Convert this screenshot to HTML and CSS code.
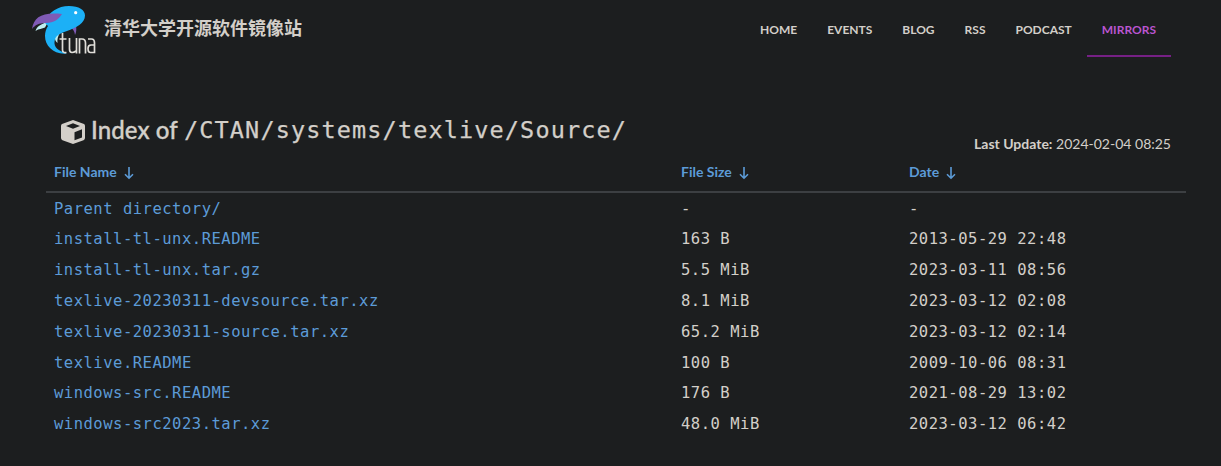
FILE: index.html
```html
<!DOCTYPE html>
<html lang="zh-CN">
<head>
<meta charset="utf-8">
<title>Index of /CTAN/systems/texlive/Source/</title>
<link rel="stylesheet" href="styles.css">
</head>
<body>
<header class="navbar">
  <a class="brand">
    <svg class="logo" viewBox="0 0 65 50" width="65" height="50" aria-hidden="true">
      <path fill="#7f5ab5" d="M38 21 44 19C44.500 23 44.500 26 43 29 42.500 25 41 23 38 21Z"/>
      <path fill="#bfeff2" d="M16 16C9 18 5 20 3.500 25 7 22.500 10 23 13 21.500ZM26 25C22 29 22 34 25.500 37 25 33 26 30 28 27Z"/>
      <path fill="#1cb0f6" d="M12 16C17 6 26 0 37 0 47 0 53 4 53 9.500 53 17 44 22 35 25 27 27.500 23 30 22.500 36 22 41 26 45 35 47.500 22 49 13 40 13 30 13 26 14 23 16 20Z"/>
      <path fill="#7f5ab5" d="M0 23C2 11 10 6 30 8 27 13 22 17 14 17 7 17 3 19 0 23Z"/>
      <circle cx="43.700" cy="6.700" r="1.600" fill="#fff"/>
      <path fill="none" stroke="#e0ded9" stroke-width="1.700" d="M30.500 27V44Q30.500 47 34.500 46.500M27.500 33H34.500M37.500 32V43Q37.500 46.500 40 46.500 42 46.500 44 45M44.500 32V47.500M47.500 47.500V33H50Q53.500 33 53.500 37V47.500M56 33H59.500Q62.500 33 62.500 37V46.500H58.500Q56 46.500 56 42.500 56 39 59 39H62.500"/>
    </svg>
    <span class="site-name">清华大学开源软件镜像站</span>
  </a>
  <nav class="menu">
    <a>HOME</a><a>EVENTS</a><a>BLOG</a><a>RSS</a><a>PODCAST</a><a class="active">MIRRORS</a>
  </nav>
</header>
<main class="listing">
  <div class="heading">
    <h1>
      <svg class="cube" viewBox="0 0 24 24" width="24" height="24" aria-hidden="true">
        <path fill="currentColor" fill-rule="evenodd" d="M12 0 23 4Q24 4.500 24 6V18Q24 19.500 22.500 20.200L12 24 1.500 20.200Q0 19.500 0 18V6Q0 4.500 1 4ZM12 3.200 5 6 12 8.800 19 6ZM13.500 12.200V20.300L21 17.400V9.300Z"/>
      </svg><span class="label">Index of</span><code>/CTAN/systems/texlive/Source/</code>
    </h1>
    <p class="updated"><b>Last Update:</b> 2024-02-04 08:25</p>
  </div>
  <table class="files">
    <thead><tr>
      <th class="name">File Name<svg class="arrow" viewBox="0 0 10 14" width="10" height="14"><path d="M5 1V12M1 8.200 5 12.200 9 8.200"/></svg></th>
      <th class="size">File Size<svg class="arrow" viewBox="0 0 10 14" width="10" height="14"><path d="M5 1V12M1 8.200 5 12.200 9 8.200"/></svg></th>
      <th>Date<svg class="arrow" viewBox="0 0 10 14" width="10" height="14"><path d="M5 1V12M1 8.200 5 12.200 9 8.200"/></svg></th>
    </tr></thead>
    <tbody>
      <tr><td><a>Parent directory/</a></td><td>-</td><td>-</td></tr>
      <tr><td><a>install-tl-unx.README</a></td><td>163 B</td><td>2013-05-29 22:48</td></tr>
      <tr><td><a>install-tl-unx.tar.gz</a></td><td>5.5 MiB</td><td>2023-03-11 08:56</td></tr>
      <tr><td><a>texlive-20230311-devsource.tar.xz</a></td><td>8.1 MiB</td><td>2023-03-12 02:08</td></tr>
      <tr><td><a>texlive-20230311-source.tar.xz</a></td><td>65.2 MiB</td><td>2023-03-12 02:14</td></tr>
      <tr><td><a>texlive.README</a></td><td>100 B</td><td>2009-10-06 08:31</td></tr>
      <tr><td><a>windows-src.README</a></td><td>176 B</td><td>2021-08-29 13:02</td></tr>
      <tr><td><a>windows-src2023.tar.xz</a></td><td>48.0 MiB</td><td>2023-03-12 06:42</td></tr>
    </tbody>
  </table>
</main>
</body>
</html>
```
FILE: styles.css
```css
* { box-sizing: border-box; }
body {
  margin: 0;
  height: 466px;
  overflow: hidden;
  background: #1c1e1f;
  color: #d3cfc9;
  font: 14px/21px Lato, "Noto Sans CJK SC", sans-serif;
}
.navbar {
  display: flex;
  justify-content: space-between;
  height: 57px;
  padding: 0 50px 0 32px;
}
.brand { display: flex; padding-top: 6px; }
.logo { display: block; }
.site-name {
  margin: 7px 0 0 7px;
  font: bold 18px/28px "Noto Sans CJK SC", sans-serif;
}
.menu { display: flex; }
.menu a {
  height: 57px;
  padding: 20px 15px 0;
  font-size: 12px;
  font-weight: 700;
  line-height: 20px;
}
.menu .active { color: #b955cf; border-bottom: 2px solid #762085; }
.listing { width: 1140px; margin: 53px 0 0 46px; }
.heading {
  display: flex;
  justify-content: space-between;
  height: 47px;
  padding: 0 15px;
}
h1 {
  display: flex;
  margin: 0;
  font-size: 24px;
  font-weight: 500;
  line-height: 40px;
}
.cube { margin: 10px 6px 0 0; }
.label { width: 93px; letter-spacing: .1px; -webkit-text-stroke: .35px currentColor; }
h1 code {
  font: 23.5px/40px "DejaVu Sans Mono", monospace;
  letter-spacing: 1.13px;
  -webkit-text-stroke: .25px currentColor;
}
.updated { margin: 23px 0 0; }
.files { width: 1140px; border-collapse: collapse; table-layout: fixed; }
th {
  height: 35px;
  padding: 0 8px 6px;
  border-bottom: 2px solid #3c3f42;
  color: #5c9bd7;
  font-weight: 700;
  text-align: left;
}
.name { width: 627px; }
.size { width: 228px; }
.arrow {
  width: 10px;
  height: 14px;
  margin-left: 7px;
  vertical-align: -3px;
  fill: none;
  stroke: currentColor;
  stroke-width: 1.6;
}
td {
  height: 31px;
  padding: 1px 8px 0;
  font: 15.500px/24px "DejaVu Sans Mono", monospace;
  letter-spacing: .51px;
}
tr:nth-child(6) td { height: 30px; }
td a { color: #5c9bd7; }
```
